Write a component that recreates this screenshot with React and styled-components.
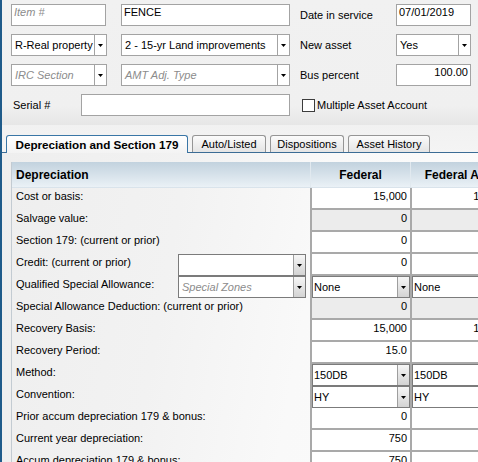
import React from 'react';
import styled, { createGlobalStyle } from 'styled-components';

const GlobalStyle = createGlobalStyle`
  html, body {
    margin: 0;
    padding: 0;
    overflow: hidden;
  }
  body {
    font-family: "Liberation Sans", Arial, sans-serif;
    font-size: 11px;
    color: #000;
    background: #f3f3f3;
  }
`;

const Window = styled.div`
  width: 478px;
  height: 462px;
  box-sizing: border-box;
  border-left: 2px solid #1f5b8a;
  display: flex;
  flex-direction: column;
  overflow: hidden;
`;

const TopForm = styled.div`
  height: 125px;
  flex-shrink: 0;
  box-sizing: border-box;
  padding: 4px 0 0 9px;
  background: linear-gradient(to bottom, #f1f1f1 0%, #f0f0f0 85%, #e6e6e6 100%);
`;

const FormGrid = styled.div`
  display: grid;
  grid-template-columns: 110px 179px 96px 75px;
  grid-auto-rows: 22px;
  row-gap: 8px;
`;

const TextBox = styled.div`
  width: ${(p) => p.$w}px;
  box-sizing: border-box;
  border: 1px solid #a3a3a3;
  background: #fff;
  padding: 0 2px;
  line-height: 15px;
  text-align: ${(p) => (p.$right ? 'right' : 'left')};
  white-space: nowrap;
  overflow: hidden;
`;

const Placeholder = styled.span`
  color: #8c8c8c;
  font-style: italic;
`;

const FieldLabel = styled.div`
  display: flex;
  align-items: center;
  white-space: nowrap;
`;

const ComboBox = styled.div`
  width: ${(p) => (p.$w ? `${p.$w}px` : '100%')};
  height: 22px;
  box-sizing: border-box;
  display: flex;
  border: 1px solid ${(p) => (p.$dark ? '#7b7b7b' : '#a3a3a3')};
  background: #fff;
`;

const ComboText = styled.div`
  flex: 1;
  min-width: 0;
  display: flex;
  align-items: center;
  padding-left: ${(p) => p.$pad ?? 3}px;
  white-space: nowrap;
  overflow: hidden;
`;

const ComboButton = styled.div`
  width: 11px;
  flex-shrink: 0;
  display: flex;
  align-items: center;
  justify-content: center;
  border-left: 1px solid ${(p) => (p.$shaded ? '#9e9e9e' : '#a3a3a3')};
  background: ${(p) => (p.$shaded ? 'linear-gradient(to bottom, #f6f6f6, #d3d3d3)' : '#fff')};
`;

const Arrow = () => (
  <svg width="5" height="3" viewBox="0 0 5 3">
    <path d="M0 0h5L2.5 3z" fill="#000" />
  </svg>
);

const Combo = ({ value, placeholder, width, shaded, dark, pad }) => (
  <ComboBox $w={width} $dark={dark}>
    <ComboText $pad={pad}>{value || <Placeholder>{placeholder}</Placeholder>}</ComboText>
    <ComboButton $shaded={shaded}>
      <Arrow />
    </ComboButton>
  </ComboBox>
);

const SerialRow = styled.div`
  grid-column: span 2;
  display: flex;
  align-items: center;
`;

const SerialLabel = styled.div`
  width: 70px;
  padding-left: 2px;
  box-sizing: border-box;
`;

const CheckRow = styled.div`
  grid-column: span 2;
  display: flex;
  align-items: center;
  gap: 2px;
  padding-left: 2px;
`;

const CheckBox = styled.div`
  width: 13px;
  height: 13px;
  box-sizing: border-box;
  border: 1px solid #3c3c3c;
  background: #fff;
`;

const TabStrip = styled.div`
  height: 28px;
  flex-shrink: 0;
  box-sizing: border-box;
  display: flex;
  align-items: flex-end;
  gap: 4px;
  padding-left: 4px;
  border-bottom: 1px solid #3b6c95;
  background: linear-gradient(to bottom, #f1f1f1, #f4f4f4);
`;

const Tab = styled.div`
  width: ${(p) => p.$w}px;
  height: ${(p) => (p.$active ? 18 : 17)}px;
  margin-bottom: ${(p) => (p.$active ? -1 : 0)}px;
  box-sizing: border-box;
  display: flex;
  align-items: center;
  justify-content: center;
  padding-bottom: ${(p) => (p.$active ? 1 : 0)}px;
  border: 1px solid ${(p) => (p.$active ? '#3a76a6' : '#959595')};
  border-bottom: none;
  border-radius: 3px 3px 0 0;
  background: ${(p) =>
    p.$active
      ? 'linear-gradient(to bottom, #ffffff, #f3f3f3)'
      : 'linear-gradient(to bottom, #fbfbfb, #e4e4e4)'};
  font-weight: ${(p) => (p.$active ? 'bold' : 'normal')};
  font-size: ${(p) => (p.$active ? '11.7px' : '11px')};
  white-space: nowrap;
`;

const Panel = styled.div`
  flex: 1;
  padding: 9px 0 0 9px;
  background: linear-gradient(100deg, #eeeeee 0%, #f2f2f2 35%, #f9f9f9 62%, #fbfbfb 100%);
`;

const Grid = styled.div`
  width: 499px;
  height: 100%;
  border-left: 1px solid #c3cbd2;
`;

const COLS = '298px 100px 100px';

const HeaderRow = styled.div`
  display: grid;
  grid-template-columns: ${COLS};
  height: 25px;
  border-bottom: 1px solid #d9e3eb;
  background: linear-gradient(to bottom, #c2d2de, #eaf1f6);
  font-weight: bold;
  font-size: 12px;
`;

const HeaderCell = styled.div`
  display: flex;
  align-items: center;
  justify-content: ${(p) => (p.$center ? 'center' : 'flex-start')};
  padding-left: ${(p) => (p.$center ? 0 : 4)}px;
  border-left: ${(p) => (p.$center ? '1px solid #e1e9ef' : 'none')};
  white-space: nowrap;
`;

const DataRow = styled.div`
  display: grid;
  grid-template-columns: ${COLS};
  height: 22px;
`;

const LabelCell = styled.div`
  display: flex;
  align-items: flex-start;
  padding: 1px 4px 0 4px;
  line-height: 15px;
  white-space: nowrap;
`;

const LabelText = styled.span`
  flex: 1;
`;

const ValueCell = styled.div`
  box-sizing: border-box;
  border-left: 2px solid #a9a9a9;
  border-bottom: ${(p) => (p.$select ? 'none' : '2px solid #a9a9a9')};
  background: ${(p) => (p.$disabled ? '#ececec' : '#fff')};
  padding: ${(p) => (p.$select ? 0 : '1px 3px 0 0')};
  line-height: 15px;
  text-align: right;
  white-space: nowrap;
  overflow: hidden;
`;

const LabelCombo = styled.div`
  width: 128px;
  margin-top: -1px;
`;

const rows = [
  { label: 'Cost or basis:', fed: '15,000', amt: '15,000' },
  { label: 'Salvage value:', fed: '0', amt: '0', disabled: true },
  { label: 'Section 179: (current or prior)', fed: '0', amt: '' },
  { label: 'Credit: (current or prior)', fed: '0', amt: '', combo: { value: '' } },
  {
    label: 'Qualified Special Allowance:',
    fed: 'None',
    amt: 'None',
    select: true,
    combo: { placeholder: 'Special Zones' },
  },
  { label: 'Special Allowance Deduction: (current or prior)', fed: '0', amt: '0', disabled: true },
  { label: 'Recovery Basis:', fed: '15,000', amt: '15,000' },
  { label: 'Recovery Period:', fed: '15.0', amt: '15.0' },
  { label: 'Method:', fed: '150DB', amt: '150DB', select: true },
  { label: 'Convention:', fed: 'HY', amt: 'HY', select: true },
  { label: 'Prior accum depreciation 179 & bonus:', fed: '0', amt: '0' },
  { label: 'Current year depreciation:', fed: '750', amt: '750' },
  { label: 'Accum depreciation 179 & bonus:', fed: '750', amt: '750' },
];

const tabs = [
  { name: 'Depreciation and Section 179', w: 182, active: true },
  { name: 'Auto/Listed', w: 74 },
  { name: 'Dispositions', w: 74 },
  { name: 'Asset History', w: 82 },
];

const renderValue = (row, value) =>
  row.select ? (
    <ValueCell $select>
      <Combo value={value} dark shaded pad={1} />
    </ValueCell>
  ) : (
    <ValueCell $disabled={row.disabled}>{value}</ValueCell>
  );

const App = () => (
  <>
    <GlobalStyle />
    <Window>
      <TopForm>
        <FormGrid>
          <TextBox $w={95}>
            <Placeholder>Item #</Placeholder>
          </TextBox>
          <TextBox $w={169}>FENCE</TextBox>
          <FieldLabel>Date in service</FieldLabel>
          <TextBox $w={75}>07/01/2019</TextBox>

          <Combo width={96} value="R-Real property" />
          <Combo width={169} value="2 - 15-yr Land improvements" />
          <FieldLabel>New asset</FieldLabel>
          <Combo width={75} value="Yes" />

          <Combo width={96} placeholder="IRC Section" />
          <Combo width={169} placeholder="AMT Adj. Type" />
          <FieldLabel>Bus percent</FieldLabel>
          <TextBox $w={75} $right>
            100.00
          </TextBox>

          <SerialRow>
            <SerialLabel>Serial #</SerialLabel>
            <TextBox $w={209} style={{ height: 22 }} />
          </SerialRow>
          <CheckRow>
            <CheckBox />
            Multiple Asset Account
          </CheckRow>
        </FormGrid>
      </TopForm>

      <TabStrip>
        {tabs.map((t) => (
          <Tab key={t.name} $w={t.w} $active={t.active}>
            {t.name}
          </Tab>
        ))}
      </TabStrip>

      <Panel>
        <Grid>
          <HeaderRow>
            <HeaderCell>Depreciation</HeaderCell>
            <HeaderCell $center>Federal</HeaderCell>
            <HeaderCell $center>Federal AMT</HeaderCell>
          </HeaderRow>
          {rows.map((row) => (
            <DataRow key={row.label}>
              <LabelCell>
                <LabelText>{row.label}</LabelText>
                {row.combo && (
                  <LabelCombo>
                    <Combo
                      value={row.combo.value}
                      placeholder={row.combo.placeholder}
                      dark
                      shaded
                    />
                  </LabelCombo>
                )}
              </LabelCell>
              {renderValue(row, row.fed)}
              {renderValue(row, row.amt)}
            </DataRow>
          ))}
        </Grid>
      </Panel>
    </Window>
  </>
);

export default App;
